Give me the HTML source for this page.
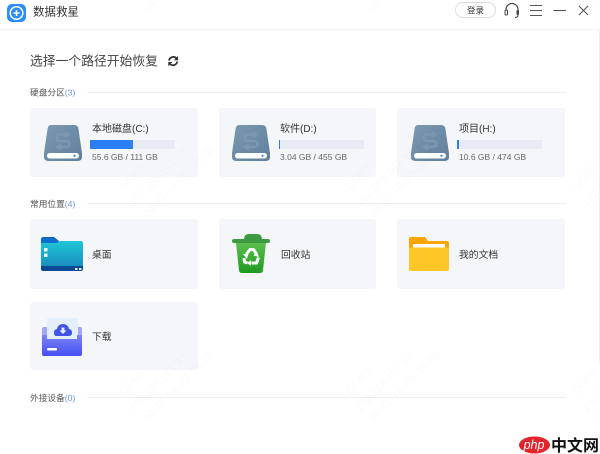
<!DOCTYPE html>
<html><head><meta charset="utf-8">
<style>
html,body{margin:0;padding:0;background:#fff}
svg{display:block}
text{font-family:"Liberation Sans","Noto Sans CJK SC",sans-serif}
</style></head><body>
<svg width="600" height="454" viewBox="0 0 600 454" xmlns="http://www.w3.org/2000/svg">
<defs>
<linearGradient id="disk" x1="0" y1="0" x2="1" y2="1"><stop offset="0" stop-color="#7b99b1"/><stop offset="1" stop-color="#5f7f9c"/></linearGradient>
<linearGradient id="desk" x1="0" y1="0" x2="0" y2="1"><stop offset="0" stop-color="#1fc6d6"/><stop offset="1" stop-color="#1a8fc0"/></linearGradient>
<linearGradient id="bin" x1="0" y1="0" x2="0" y2="1"><stop offset="0" stop-color="#5cbf4e"/><stop offset="1" stop-color="#1f9a20"/></linearGradient>
<linearGradient id="tray" x1="0" y1="0" x2="0" y2="1"><stop offset="0" stop-color="#7d83f5"/><stop offset="1" stop-color="#4450f2"/></linearGradient>
<g id="hd">
<path d="M7 0H30Q33.500 0 34.300 3L38 28V32Q38 36 33.500 36H4.500Q0 36 0 32V28L3.700 3Q4.500 0 7 0Z" fill="url(#disk)"/>
<rect x="3" y="28" width="32" height="5.500" rx="2.700" fill="#fff"/>
<circle cx="30.500" cy="30.700" r="1.100" fill="#2a7ff5"/>
<path d="M24.500 9.500H16Q12.500 9.500 12.500 12.700T16 16H22Q25.500 16 25.500 18.800T22 22H13M21 7L24.500 9.500L21 12M17 19.500L13 22L17 24.500" fill="none" stroke="#7b98af" stroke-width="2.400"/>
</g>
<g id="wm" font-size="11" fill="#000" fill-opacity=".022" transform="rotate(-45)">
<text x="0" y="0">QDRS</text>
<text x="-5" y="19">192.168.101.97</text>
<text x="-3" y="36">04-42-1A-2B-38-2B</text>
</g>
</defs>

<!-- header -->
<rect x="0" y="29" width="600" height="1.500" fill="#f6f6f7"/>
<rect x="599" y="30" width="1" height="333" fill="#efefef"/>
<rect x="7" y="4" width="19" height="18" rx="5" fill="#2b8cff"/>
<circle cx="16.500" cy="13" r="6.300" fill="none" stroke="#fff" stroke-width="1.500"/>
<path d="M13.500 13H19.500M16.500 10V16" stroke="#fff" stroke-width="1.500"/>
<text x="33" y="15.500" font-size="11.500" fill="#333">数据救星</text>
<rect x="455.500" y="2.500" width="40" height="15" rx="7.500" fill="#fff" stroke="#ddd"/>
<text x="475.500" y="13.500" font-size="8.500" fill="#333" text-anchor="middle">登录</text>
<path d="M506 12V9.500A6 6 0 0 1 518 9.500V12" fill="none" stroke="#444" stroke-width="1.200"/>
<rect x="505" y="10" width="2.500" height="5" rx="1" fill="#fff" stroke="#444" stroke-width="1"/>
<rect x="516.500" y="10" width="2.500" height="5" rx="1" fill="#444"/>
<path d="M518 15Q518 17.500 515 17.500" fill="none" stroke="#444"/>
<path d="M530 5.500H542M530 10.500H542M530 15.500H542" stroke="#555" stroke-width="1.100"/>
<path d="M553.500 10.500H566" stroke="#555" stroke-width="1.100"/>
<path d="M579 6L588 15M588 6L579 15" stroke="#555" stroke-width="1.100"/>

<text x="30" y="65.500" font-size="12.800" fill="#444">选择一个路径开始恢复</text>
<path d="M169 60.500A4.500 4.500 0 0 1 176.500 58.200M177.300 61.500A4.500 4.500 0 0 1 169.800 64" fill="none" stroke="#333" stroke-width="1.800"/>
<path d="M178 56V60.200H173.800ZM168.300 66.200V62H172.500Z" fill="#333"/>

<!-- section 1 -->
<text x="30" y="95.500" font-size="8.700" fill="#555">硬盘分区<tspan fill="#6d93e8">(3)</tspan></text>
<rect x="87" y="92" width="479" height="1" fill="#eeeef0"/>
<rect x="30" y="108" width="168" height="69" rx="3" fill="#f5f6fa"/>
<rect x="219" y="108" width="157" height="69" rx="3" fill="#f5f6fa"/>
<rect x="397" y="108" width="168" height="69" rx="3" fill="#f5f6fa"/>
<use href="#hd" x="44" y="125"/>
<use href="#hd" x="232" y="125"/>
<use href="#hd" x="411" y="125"/>
<text x="92" y="132" font-size="10" fill="#333">本地磁盘(C:)</text>
<rect x="90" y="140" width="85" height="9" fill="#e8ebf3"/><rect x="90" y="140" width="43" height="9" fill="#2a7ff5"/>
<text x="92" y="160" font-size="8.500" fill="#666">55.6 GB / 111 GB</text>
<text x="280" y="132" font-size="10" fill="#333">软件(D:)</text>
<rect x="279" y="140" width="85" height="9" fill="#e8ebf3"/><rect x="279" y="140" width="1" height="9" fill="#2a7ff5"/>
<text x="280" y="160" font-size="8.500" fill="#666">3.04 GB / 455 GB</text>
<text x="459" y="132" font-size="10" fill="#333">项目(H:)</text>
<rect x="457" y="140" width="85" height="9" fill="#e8ebf3"/><rect x="457" y="140" width="2" height="9" fill="#2a7ff5"/>
<text x="459" y="160" font-size="8.500" fill="#666">10.6 GB / 474 GB</text>

<!-- section 2 -->
<text x="30" y="207" font-size="8.700" fill="#555">常用位置<tspan fill="#6d93e8">(4)</tspan></text>
<rect x="87" y="203" width="479" height="1" fill="#eeeef0"/>
<rect x="30" y="219" width="168" height="70" rx="3" fill="#f5f6fa"/>
<rect x="219" y="219" width="157" height="70" rx="3" fill="#f5f6fa"/>
<rect x="397" y="219" width="168" height="70" rx="3" fill="#f5f6fa"/>

<!-- desktop folder -->
<path d="M41 240Q41 237 43 237H54L59 241V246H41Z" fill="#0a6cc8"/>
<path d="M41 243H57L59 241H81Q83 241 83 243V266H41Z" fill="url(#desk)"/>
<path d="M41 266H83V269Q83 271 81 271H43Q41 271 41 269Z" fill="#0b4a92"/>
<rect x="44" y="248" width="3.500" height="3.500" fill="#e8f8fb"/><rect x="44" y="253.500" width="3.500" height="3.500" fill="#e8f8fb"/>
<rect x="75" y="268" width="2.500" height="2" fill="#dfe8f5"/><rect x="79" y="268" width="2.500" height="2" fill="#dfe8f5"/>
<text x="92" y="258" font-size="9.800" fill="#333">桌面</text>

<!-- recycle bin -->
<path d="M244 240Q244 234 249 234H257Q262 234 262 240Z" fill="#3d9a42"/>
<rect x="232" y="239" width="38" height="4" rx="2" fill="#3d9a42"/>
<path d="M236 243H266L263 270Q262.700 273 260 273H242Q239.300 273 239 270Z" fill="url(#bin)"/>
<path d="M246.500 254L250 249.500H253.500L256.500 254M258.500 257.500L256.500 263H251.500M247.500 263L244.500 262L244 258" fill="none" stroke="#fff" stroke-width="3"/>
<path d="M257 251.500L259 257L253.500 255.500ZM251 260V266L247 263ZM243 254L248.500 253.500L247 259Z" fill="#fff"/>
<text x="281" y="258" font-size="9.800" fill="#333">回收站</text>

<!-- yellow folder -->
<path d="M409 239Q409 237 411 237H425L428 241H447Q449 241 449 243V250H409Z" fill="#ffa500"/>
<rect x="413" y="244" width="32" height="3.500" fill="#fff"/>
<path d="M409 247.500H449V269Q449 271 447 271H411Q409 271 409 269Z" fill="#ffc627"/>
<text x="459" y="258" font-size="9.800" fill="#333">我的文档</text>

<!-- download -->
<rect x="30" y="302" width="168" height="68" rx="3" fill="#f5f6fa"/>
<path d="M42 335V329Q42 327 44 327H80Q82 327 82 329V335Z" fill="#a3a8f5"/>
<rect x="47" y="318" width="31" height="26" fill="#e3effb"/>
<path d="M56 336Q54 336 54 332.500Q54 329.500 57 329Q58 324 63 324Q68 324 69 329Q72 329.500 72 332.500Q72 336 69 336Z" fill="#4352e8"/>
<path d="M61.500 327.500H64.500V330.500H66.500L63 334L59.500 330.500H61.500Z" fill="#e3effb"/>
<path d="M42 335H47V339H77V335H82V354Q82 356 80 356H44Q42 356 42 354Z" fill="url(#tray)"/>
<rect x="47" y="348" width="10" height="2.500" rx="1" fill="#fff"/>
<text x="92" y="340" font-size="9.800" fill="#333">下载</text>

<!-- section 3 -->
<text x="30" y="401" font-size="8.700" fill="#555">外接设备<tspan fill="#6d93e8">(0)</tspan></text>
<rect x="87" y="397" width="479" height="1" fill="#eeeef0"/>

<!-- watermarks, above the cards -->
<g>
<use href="#wm" transform="translate(-102,-15)"/><use href="#wm" transform="translate(124,-15)"/><use href="#wm" transform="translate(350,-15)"/><use href="#wm" transform="translate(576,-15)"/>
<use href="#wm" transform="translate(-102,190)"/><use href="#wm" transform="translate(124,190)"/><use href="#wm" transform="translate(350,190)"/><use href="#wm" transform="translate(576,190)"/>
<use href="#wm" transform="translate(-102,395)"/><use href="#wm" transform="translate(124,395)"/><use href="#wm" transform="translate(350,395)"/><use href="#wm" transform="translate(576,395)"/>
</g>

<!-- php logo -->
<ellipse cx="534.500" cy="445" rx="15.500" ry="8.500" fill="#e3242b"/>
<text x="534" y="449" font-size="12.500" font-style="italic" fill="#fff" text-anchor="middle">php</text>
<text x="551" y="451" font-size="16" font-weight="bold" fill="#111">中文网</text>
</svg>
</body></html>
